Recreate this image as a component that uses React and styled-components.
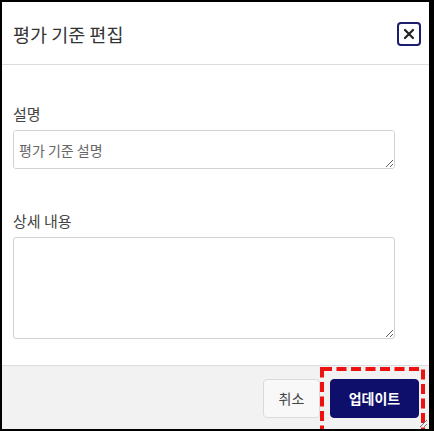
import styled, { createGlobalStyle } from "styled-components";

const GlobalStyle = createGlobalStyle`
  html, body {
    margin: 0;
    padding: 0;
    background: #000;
  }
  body {
    font-family: "Noto Sans CJK KR", "Noto Sans", sans-serif;
  }
`;

const Modal = styled.div`
  position: relative;
  margin: 2px 5px 2px 2px;
  height: 427px;
  background: #fff;
  display: flex;
  flex-direction: column;
  overflow: hidden;
`;

const Header = styled.div`
  height: 63px;
  box-sizing: border-box;
  padding: 0 8px 0 11px;
  display: flex;
  align-items: center;
  justify-content: space-between;
  border-bottom: 1px solid #dcdcdc;
`;

const Title = styled.h2`
  margin: 0;
  font-size: 18.5px;
  font-weight: 400;
  color: #333;
  line-height: 24px;
  padding-top: 1px;
`;

const CloseButton = styled.button`
  width: 24px;
  height: 24px;
  box-sizing: border-box;
  padding: 0;
  border: 2px solid #1d1d6e;
  border-radius: 4px;
  background: #fff;
  display: flex;
  align-items: center;
  justify-content: center;
  cursor: pointer;
  margin-top: 1px;
`;

const Body = styled.div`
  flex: 1;
  padding: 39px 11px 0;
`;

const Field = styled.div`
  display: flex;
  flex-direction: column;
  margin-bottom: ${(p) => p.$gap || 0}px;
`;

const Label = styled.label`
  font-size: 15px;
  line-height: 20px;
  color: #444;
  margin-bottom: 6px;
`;

const TextArea = styled.textarea`
  width: 382px;
  height: ${(p) => p.$h}px;
  box-sizing: border-box;
  border: 1px solid #d2d2d2;
  border-radius: 3px;
  padding: 9px 5px;
  font-family: "Noto Sans CJK KR", "Noto Sans", sans-serif;
  font-size: 14px;
  line-height: 20px;
  color: #333;
  &::placeholder {
    color: #666;
  }
`;

const Footer = styled.div`
  height: 64px;
  box-sizing: border-box;
  border-top: 1px solid #dcdcdc;
  background: #f2f2f2;
  display: flex;
  align-items: center;
  justify-content: flex-end;
  gap: 10px;
  padding: 1px 10px 0 0;
`;

const Button = styled.button`
  height: 39px;
  box-sizing: border-box;
  border-radius: 4px;
  font-family: "Noto Sans CJK KR", "Noto Sans", sans-serif;
  font-size: 14px;
  cursor: pointer;
`;

const CancelButton = styled(Button)`
  width: 57px;
  background: #f8f8f8;
  border: 1px solid #dadada;
  color: #444;
`;

const PrimaryButton = styled(Button)`
  width: 89px;
  background: #0e0e6b;
  border: 1px solid #0e0e6b;
  color: #fff;
  font-weight: 700;
`;

const Highlight = styled.div`
  position: relative;
  display: flex;
`;

const DashedMark = styled.svg`
  position: absolute;
  top: -12px;
  left: -10px;
  pointer-events: none;
  overflow: visible;
`;

const ResizeGrip = styled.svg`
  position: absolute;
  right: 1px;
  bottom: 1px;
`;

export default function App() {
  return (
    <>
      <GlobalStyle />
      <Modal>
        <Header>
          <Title>평가 기준 편집</Title>
          <CloseButton aria-label="닫기">
            <svg width="12" height="12" viewBox="0 0 12 12">
              <path
                d="M2 2 L10 10 M10 2 L2 10"
                stroke="#222"
                strokeWidth="2.2"
                strokeLinecap="round"
              />
            </svg>
          </CloseButton>
        </Header>
        <Body>
          <Field $gap={42}>
            <Label>설명</Label>
            <TextArea $h={39} placeholder="평가 기준 설명" />
          </Field>
          <Field>
            <Label>상세 내용</Label>
            <TextArea $h={102} />
          </Field>
        </Body>
        <Footer>
          <CancelButton>취소</CancelButton>
          <Highlight>
            <PrimaryButton>업데이트</PrimaryButton>
            <DashedMark width="105" height="70" viewBox="0 0 105 70">
              <rect
                x="2"
                y="2"
                width="101"
                height="70"
                fill="none"
                stroke="#ee1111"
                strokeWidth="4"
                strokeDasharray="10 4.5"
              />
            </DashedMark>
          </Highlight>
        </Footer>
        <ResizeGrip width="10" height="10" viewBox="0 0 10 10">
          <path d="M9 2 L2 9 M9 6 L6 9" stroke="#777" strokeWidth="1" />
        </ResizeGrip>
      </Modal>
    </>
  );
}
